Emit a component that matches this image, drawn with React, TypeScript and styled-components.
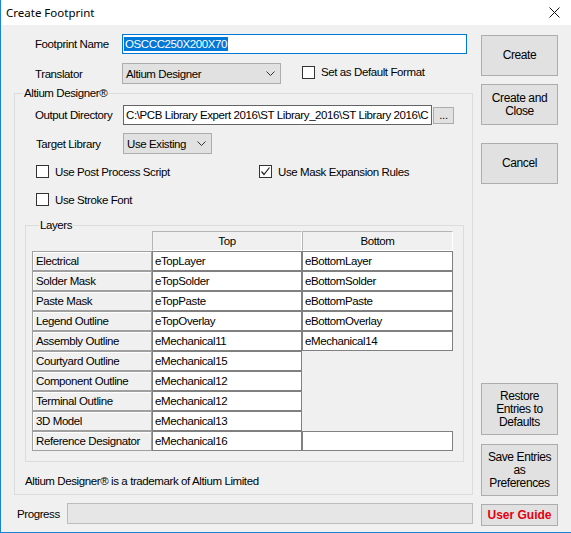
import React from 'react';
import styled, { createGlobalStyle } from 'styled-components';

const GlobalStyle = createGlobalStyle`
  html, body {
    margin: 0;
    padding: 0;
    background: #ffffff;
  }
  * {
    box-sizing: border-box;
  }
`;

const layers = [
  { name: 'Electrical', top: 'eTopLayer', bottom: 'eBottomLayer' },
  { name: 'Solder Mask', top: 'eTopSolder', bottom: 'eBottomSolder' },
  { name: 'Paste Mask', top: 'eTopPaste', bottom: 'eBottomPaste' },
  { name: 'Legend Outline', top: 'eTopOverlay', bottom: 'eBottomOverlay' },
  { name: 'Assembly Outline', top: 'eMechanical11', bottom: 'eMechanical14' },
  { name: 'Courtyard Outline', top: 'eMechanical15', bottom: null },
  { name: 'Component Outline', top: 'eMechanical12', bottom: null },
  { name: 'Terminal Outline', top: 'eMechanical12', bottom: null },
  { name: '3D Model', top: 'eMechanical13', bottom: null },
  { name: 'Reference Designator', top: 'eMechanical16', bottom: '' },
];

function Chevron() {
  return (
    <svg width="9" height="5" viewBox="0 0 9 5">
      <polyline points="0.5,0.5 4.5,4.5 8.5,0.5" fill="none" stroke="#333" strokeWidth="1" />
    </svg>
  );
}

function CloseIcon() {
  return (
    <svg width="11" height="11" viewBox="0 0 11 11">
      <line x1="0.5" y1="0.5" x2="10.5" y2="10.5" stroke="#111" strokeWidth="1" />
      <line x1="10.5" y1="0.5" x2="0.5" y2="10.5" stroke="#111" strokeWidth="1" />
    </svg>
  );
}

function CheckBox({ checked, label }: { checked?: boolean; label: string }) {
  return (
    <CheckRow>
      <Box>
        {checked && (
          <svg width="11" height="11" viewBox="0 0 11 11">
            <polyline points="1.5,5.5 4,8.5 9.5,1.5" fill="none" stroke="#222" strokeWidth="1.2" />
          </svg>
        )}
      </Box>
      <span>{label}</span>
    </CheckRow>
  );
}

export default function App() {
  return (
    <>
      <GlobalStyle />
      <Window>
        <TitleBar>
          <Title>Create Footprint</Title>
          <CloseBtn>
            <CloseIcon />
          </CloseBtn>
        </TitleBar>
        <Body>
          <MainColumn>
            <FieldRow>
              <Label>Footprint Name</Label>
              <NameInput>
                <Selected>OSCCC250X200X70</Selected>
              </NameInput>
            </FieldRow>
            <FieldRow $gap={9}>
              <Label>Translator</Label>
              <Select $width={159}>
                <span>Altium Designer</span>
                <Chevron />
              </Select>
              <DefaultCheck>
                <CheckBox label="Set as Default Format" />
              </DefaultCheck>
            </FieldRow>

            <Group>
              <GroupLegend>Altium Designer®</GroupLegend>
              <InnerRow $top={5}>
                <InnerLabel>Output Directory</InnerLabel>
                <PathInput>C:\PCB Library Expert 2016\ST Library_2016\ST Library 2016\C</PathInput>
                <BrowseButton>...</BrowseButton>
              </InnerRow>
              <InnerRow $top={8}>
                <InnerLabel $pad={1}>Target Library</InnerLabel>
                <Select $width={89}>
                  <span>Use Existing</span>
                  <Chevron />
                </Select>
              </InnerRow>
              <CheckGrid $top={11}>
                <CheckBox label="Use Post Process Script" />
                <CheckBox checked label="Use Mask Expansion Rules" />
              </CheckGrid>
              <CheckGrid $top={15}>
                <CheckBox label="Use Stroke Font" />
              </CheckGrid>

              <LayersGroup>
                <LayersLegend>Layers</LayersLegend>
                <LayerTable>
                  <Corner />
                  <HeadCell>Top</HeadCell>
                  <HeadCell>Bottom</HeadCell>
                  {layers.map((l) => (
                    <React.Fragment key={l.name}>
                      <RowHead>{l.name}</RowHead>
                      <DataCell>{l.top}</DataCell>
                      {l.bottom === null ? <EmptyCell /> : <DataCell>{l.bottom}</DataCell>}
                    </React.Fragment>
                  ))}
                </LayerTable>
              </LayersGroup>

              <Trademark>Altium Designer® is a trademark of Altium Limited</Trademark>
            </Group>

            <ProgressRow>
              <ProgressLabel>Progress</ProgressLabel>
              <ProgressBar />
            </ProgressRow>
          </MainColumn>

          <ButtonColumn>
            <ActionButton $h={41} $top={10}>Create</ActionButton>
            <ActionButton $h={41} $top={8}>Create and<br />Close</ActionButton>
            <ActionButton $h={41} $top={18}>Cancel</ActionButton>
            <ActionButton $h={52} $top={199}>Restore<br />Entries to<br />Defaults</ActionButton>
            <ActionButton $h={52} $top={9}>Save Entries<br />as<br />Preferences</ActionButton>
            <GuideButton>User Guide</GuideButton>
          </ButtonColumn>
        </Body>
      </Window>
    </>
  );
}

const Window = styled.div`
  width: 571px;
  height: 533px;
  border-left: 1px solid #1883d7;
  border-bottom: 1px solid #1883d7;
  background: #f0f0f0;
  display: flex;
  flex-direction: column;
  overflow: hidden;
  font-family: "Liberation Sans", Arial, sans-serif;
  font-size: 11.5px;
  letter-spacing: -0.4px;
  color: #000;
`;

const TitleBar = styled.div`
  height: 25px;
  background: #ffffff;
  display: flex;
  align-items: center;
  justify-content: space-between;
  padding: 0 11px 0 5px;
`;

const Title = styled.div`
  font-family: "Noto Sans", "Open Sans", sans-serif;
  font-size: 11.5px;
  letter-spacing: 0;
  color: #000;
`;

const CloseBtn = styled.div`
  display: flex;
  align-items: center;
`;

const Body = styled.div`
  flex: 1;
  display: flex;
  padding-left: 13px;
`;

const MainColumn = styled.div`
  width: 459px;
  display: flex;
  flex-direction: column;
  padding-top: 9px;
`;

const FieldRow = styled.div<{ $gap?: number }>`
  display: flex;
  align-items: center;
  margin-top: ${(p) => p.$gap ?? 0}px;
  padding-left: 21px;
`;

const Label = styled.div`
  width: 87px;
  white-space: nowrap;
`;

const NameInput = styled.div`
  width: 345px;
  height: 20px;
  background: #fff;
  border: 1px solid #0078d7;
  display: flex;
  align-items: center;
  padding-left: 1px;
`;

const Selected = styled.span`
  background: #0078d7;
  color: #fff;
  padding: 0 1px;
  line-height: 14px;
`;

const Select = styled.div<{ $width: number }>`
  width: ${(p) => p.$width}px;
  height: 21px;
  background: #e1e1e1;
  border: 1px solid #adadad;
  display: flex;
  align-items: center;
  justify-content: space-between;
  padding: 0 5px 0 3px;
`;

const DefaultCheck = styled.div`
  margin-left: 21px;
  margin-top: -3px;
`;

const CheckRow = styled.div`
  display: flex;
  align-items: center;
  gap: 6px;
  height: 13px;
  white-space: nowrap;
`;

const Box = styled.div`
  width: 13px;
  height: 13px;
  background: #fff;
  border: 1px solid #333;
  display: flex;
  align-items: center;
  justify-content: center;
`;

const Group = styled.fieldset`
  margin: 3px 0 0 0;
  padding: 0 0 6px 0;
  border: 1px solid #dcdcdc;
  min-width: 0;
`;

const GroupLegend = styled.legend`
  margin-left: 8px;
  padding: 0 1px;
  line-height: 13px;
`;

const InnerRow = styled.div<{ $top: number }>`
  display: flex;
  align-items: center;
  margin-top: ${(p) => p.$top}px;
  padding-left: 20px;
`;

const InnerLabel = styled.div<{ $pad?: number }>`
  width: 88px;
  padding-left: ${(p) => p.$pad ?? 0}px;
  white-space: nowrap;
`;

const PathInput = styled.div`
  width: 309px;
  height: 20px;
  background: #fff;
  border: 1px solid #646464;
  padding: 0 2px;
  line-height: 18px;
  white-space: nowrap;
  overflow: hidden;
`;

const BrowseButton = styled.div`
  width: 21px;
  height: 17px;
  margin-left: 1px;
  background: #e1e1e1;
  border: 1px solid #adadad;
  text-align: center;
  line-height: 15px;
`;

const CheckGrid = styled.div<{ $top: number }>`
  display: grid;
  grid-template-columns: 223px auto;
  margin-top: ${(p) => p.$top}px;
  padding-left: 21px;
`;

const LayersGroup = styled.fieldset`
  margin: 13px 0 0 10px;
  width: 439px;
  padding: 0 0 10px 6px;
  border: 1px solid #dcdcdc;
  min-width: 0;
`;

const LayersLegend = styled.legend`
  margin-left: 7px;
  padding: 0 1px;
  line-height: 12px;
`;

const LayerTable = styled.div`
  display: grid;
  grid-template-columns: 120px 150px 151px;
  grid-auto-rows: 20px;
`;

const Corner = styled.div``;

const HeadCell = styled.div`
  border: 1px solid;
  border-color: #b5b5b5 #ffffff #ffffff #b5b5b5;
  display: flex;
  align-items: center;
  justify-content: center;
`;

const RowHead = styled.div`
  border: 1px solid #a0a0a0;
  box-shadow: inset 1px 1px 0 #ffffff;
  padding-left: 3px;
  display: flex;
  align-items: center;
  white-space: nowrap;
`;

const DataCell = styled.div`
  background: #fff;
  border: 1px solid #808080;
  padding-left: 2px;
  display: flex;
  align-items: center;
  white-space: nowrap;
`;

const EmptyCell = styled.div``;

const Trademark = styled.div`
  margin: 13px 0 0 10px;
  line-height: 13px;
`;

const ProgressRow = styled.div`
  display: flex;
  align-items: center;
  margin-top: 8px;
  padding-left: 3px;
`;

const ProgressLabel = styled.div`
  width: 50px;
`;

const ProgressBar = styled.div`
  width: 406px;
  height: 21px;
  background: #e6e6e6;
  border: 1px solid #bcbcbc;
`;

const ButtonColumn = styled.div`
  width: 77px;
  margin-left: 8px;
  display: flex;
  flex-direction: column;
`;

const ActionButton = styled.div<{ $h: number; $top: number }>`
  height: ${(p) => p.$h}px;
  margin-top: ${(p) => p.$top}px;
  background: #e1e1e1;
  border: 1px solid #adadad;
  display: flex;
  align-items: center;
  justify-content: center;
  text-align: center;
  font-size: 12px;
  line-height: 13px;
`;

const GuideButton = styled.div`
  height: 22px;
  margin-top: 8px;
  background: #e1e1e1;
  border: 1px solid #adadad;
  display: flex;
  align-items: center;
  justify-content: center;
  color: #e3000f;
  font-weight: bold;
  font-size: 12px;
  letter-spacing: 0;
`;
